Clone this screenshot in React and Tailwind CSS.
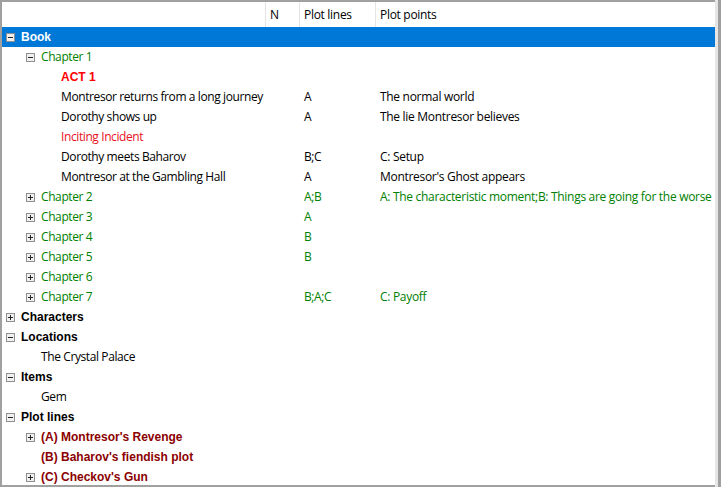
import React from "react";

const GREEN = "text-[#008000]";

const rows = [
    { level: 0, box: "minus", text: "Book", bold: true, selected: true },
    { level: 1, box: "minus", text: "Chapter 1", color: GREEN },
    { level: 2, text: "ACT 1", bold: true, color: "text-[#ff0000]" },
    { level: 2, text: "Montresor returns from a long journey", lines: "A", points: "The normal world" },
    { level: 2, text: "Dorothy shows up", lines: "A", points: "The lie Montresor believes" },
    { level: 2, text: "Inciting Incident", color: "text-[#e81123]" },
    { level: 2, text: "Dorothy meets Baharov", lines: "B;C", points: "C: Setup" },
    { level: 2, text: "Montresor at the Gambling Hall", lines: "A", points: "Montresor's Ghost appears" },
    { level: 1, box: "plus", text: "Chapter 2", color: GREEN, lines: "A;B", points: "A: The characteristic moment;B: Things are going for the worse" },
    { level: 1, box: "plus", text: "Chapter 3", color: GREEN, lines: "A" },
    { level: 1, box: "plus", text: "Chapter 4", color: GREEN, lines: "B" },
    { level: 1, box: "plus", text: "Chapter 5", color: GREEN, lines: "B" },
    { level: 1, box: "plus", text: "Chapter 6", color: GREEN },
    { level: 1, box: "plus", text: "Chapter 7", color: GREEN, lines: "B;A;C", points: "C: Payoff" },
    { level: 0, box: "plus", text: "Characters", bold: true },
    { level: 0, box: "minus", text: "Locations", bold: true },
    { level: 1, text: "The Crystal Palace" },
    { level: 0, box: "minus", text: "Items", bold: true },
    { level: 1, text: "Gem" },
    { level: 0, box: "minus", text: "Plot lines", bold: true },
    { level: 1, box: "plus", text: "(A) Montresor's Revenge", bold: true, color: "text-[#8b0000]" },
    { level: 1, text: "(B) Baharov's fiendish plot", bold: true, color: "text-[#8b0000]" },
    { level: 1, box: "plus", text: "(C) Checkov's Gun", bold: true, color: "text-[#8b0000]" },
];

// expand / collapse box
const ExpandBox = ({ kind }) => (
    <svg width="9" height="9" viewBox="0 0 9 9" className="shrink-0">
        <rect x="0.5" y="0.5" width="8" height="8" fill="#f0f0f0" stroke="#8e8f8f" />
        <line x1="2" y1="4.5" x2="7" y2="4.5" stroke="#222" />
        {kind === "plus" && <line x1="4.5" y1="2" x2="4.5" y2="7" stroke="#222" />}
    </svg>
);

const indents = ["pl-[4px]", "pl-[24px]", "pl-[44px]"];

const Row = ({ row }) => {
    const color = row.selected ? "text-white" : row.color || "text-black";
    const textFont = row.bold
        ? "font-['Liberation_Sans',Arial,sans-serif] font-bold"
        : "font-['Open_Sans',sans-serif] tracking-[-0.4px]";

    return (
        <div className={`flex h-5 items-center text-[12px] ${row.selected ? "bg-[#0078d7]" : ""} ${color}`}>
            <div className={`flex w-[263px] shrink-0 items-center whitespace-nowrap ${indents[row.level]}`}>
                <div className="flex w-[15px] shrink-0 items-center">
                    {row.box && <ExpandBox kind={row.box} />}
                </div>
                <span className={textFont}>{row.text}</span>
            </div>
            <div className="w-[34px] shrink-0" />
            <div className="w-[76px] shrink-0 pl-[5px] font-['Open_Sans',sans-serif] tracking-[-0.4px]">
                {row.lines}
            </div>
            <div className="flex-1 whitespace-nowrap pl-[5px] font-['Open_Sans',sans-serif] tracking-[-0.3px]">
                {row.points}
            </div>
        </div>
    );
};

export default function App() {
    return (
        <div className="flex h-[487px] w-[721px] bg-white">
            <div className="flex flex-1 flex-col overflow-hidden border-l-2 border-t-2 border-b-2 border-[#a0a0a0]">
                {/* column headers */}
                <div className="flex h-[25px] shrink-0 items-center text-[12px] text-black font-['Open_Sans',sans-serif] tracking-[-0.3px]">
                    <div className="h-full w-[263px] shrink-0" />
                    <div className="flex h-full w-[34px] shrink-0 items-center border-l border-[#e5e5e5] pl-[4px]">N</div>
                    <div className="flex h-full w-[76px] shrink-0 items-center border-l border-[#e5e5e5] pl-[4px]">Plot lines</div>
                    <div className="flex h-full flex-1 items-center border-l border-[#e5e5e5] pl-[4px]">Plot points</div>
                </div>

                <div className="flex flex-col">
                    {rows.map((row, i) => (
                        <Row key={i} row={row} />
                    ))}
                </div>
            </div>
            <div className="w-[3px] shrink-0 bg-[#e6e6e6]" />
            <div className="w-[3px] shrink-0 bg-[#a0a0a0]" />
        </div>
    );
}
